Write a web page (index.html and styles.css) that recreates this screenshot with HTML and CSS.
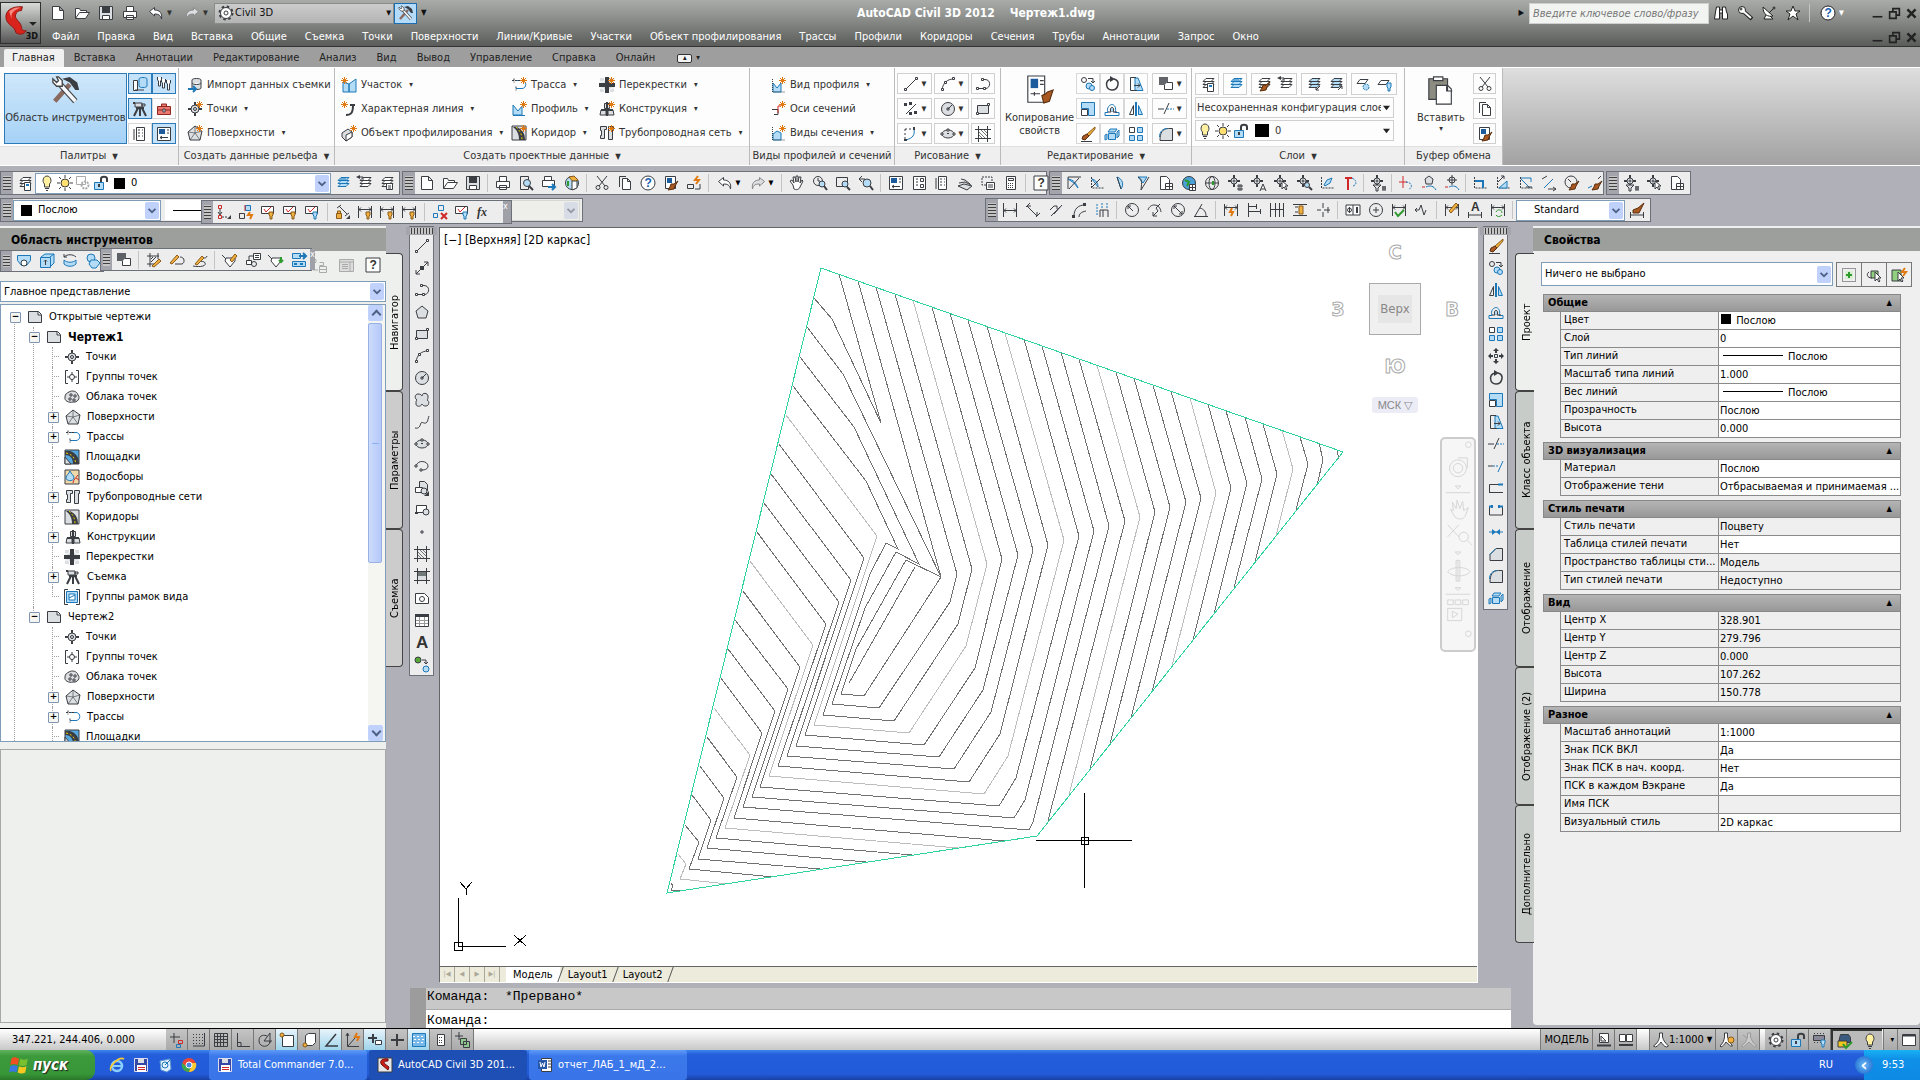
FILE: index.html
```html
<!DOCTYPE html>
<html lang="ru">
<head>
  <meta charset="utf-8">
  <meta name="viewport" content="width=device-width, initial-scale=1.0">
  <title>AutoCAD Civil 3D 2012 - Чертеж1.dwg</title>
  <link rel="stylesheet" href="styles.css">
</head>
<body>
<header class="titlebar">
  <button class="app-button" aria-label="Меню приложения">
    <svg viewBox="0 0 40 42"><path d="M22 4C10 3 3 9 5 17c2 7 9 7 10 14 4 3 9 2 11-2-3 1-5-1-5-4-1-6-8-8-6-13 1-3 3-4 6-4z" fill="#d8241c" stroke="#8c1512"/><path d="M8 9c4-4 8-5 12-4-6 2-11 5-9 12z" fill="#f58a80" stroke="none"/><path d="M29 20h8l-4 4z" fill="#222" stroke="none"/></svg>
    <span>3D</span>
  </button>
  <div class="title-rows">
    <div class="title-row">
      <div class="strip quick" data-icons="new open save print undo> redo>"></div>
      <span class="workspace"><i data-icon="gear"></i><select aria-label="Рабочее пространство"><option>Civil 3D</option></select></span>
      <button class="tool active" data-icon="hammer" aria-label="Область инструментов"></button>
      <span class="qat-more">▼</span>
      <h1>AutoCAD Civil 3D 2012 &nbsp;&nbsp; Чертеж1.dwg</h1>
      <span class="search-mark">▶</span>
      <input class="search" type="text" placeholder="Введите ключевое слово/фразу" aria-label="Поиск">
      <div class="strip infocenter" data-icons="binocular key dish star | helpc>"></div>
      <div class="strip window" data-icons="min restore close"></div>
    </div>
    <nav class="menu">
      <a href="#">Файл</a><a href="#">Правка</a><a href="#">Вид</a><a href="#">Вставка</a><a href="#">Общие</a><a href="#">Съемка</a><a href="#">Точки</a><a href="#">Поверхности</a><a href="#">Линии/Кривые</a><a href="#">Участки</a><a href="#">Объект профилирования</a><a href="#">Трассы</a><a href="#">Профили</a><a href="#">Коридоры</a><a href="#">Сечения</a><a href="#">Трубы</a><a href="#">Аннотации</a><a href="#">Запрос</a><a href="#">Окно</a>
      <div class="strip window" data-icons="min restore close"></div>
    </nav>
  </div>
</header>

<nav class="ribbon-tabs">
  <a href="#" class="current">Главная</a><a href="#">Вставка</a><a href="#">Аннотации</a><a href="#">Редактирование</a><a href="#">Анализ</a><a href="#">Вид</a><a href="#">Вывод</a><a href="#">Управление</a><a href="#">Справка</a><a href="#">Онлайн</a>
  <button class="collapse" aria-label="Свернуть ленту">▴</button><span class="drop">▾</span>
</nav>

<section class="ribbon">
  <div class="panel p-palettes">
    <div class="panel-body">
      <button class="big active" data-icon="hammer">Область инструментов</button>
      <div class="grid2 toggles" data-icons="prospector! wrenches! survey! toolbox panelbook props!"></div>
    </div>
    <h2>Палитры <b>▼</b></h2>
  </div>
  <div class="panel p-ground">
    <div class="panel-body">
      <div class="cmds">
        <button class="cmd" data-icon="import">Импорт данных съемки</button>
        <button class="cmd more" data-icon="pointnew">Точки</button>
        <button class="cmd more" data-icon="surfnew">Поверхности</button>
      </div>
    </div>
    <h2>Создать данные рельефа <b>▼</b></h2>
  </div>
  <div class="panel p-design">
    <div class="panel-body">
      <div class="cmds">
        <button class="cmd more" data-icon="parcel">Участок</button>
        <button class="cmd more" data-icon="feature">Характерная линия</button>
        <button class="cmd more" data-icon="grading">Объект профилирования</button>
      </div>
      <div class="cmds">
        <button class="cmd more" data-icon="alignnew">Трасса</button>
        <button class="cmd more" data-icon="profile">Профиль</button>
        <button class="cmd more" data-icon="corridor">Коридор</button>
      </div>
      <div class="cmds">
        <button class="cmd more" data-icon="crossnew">Перекрестки</button>
        <button class="cmd more" data-icon="assemblynew">Конструкция</button>
        <button class="cmd more" data-icon="pipenew">Трубопроводная сеть</button>
      </div>
    </div>
    <h2>Создать проектные данные <b>▼</b></h2>
  </div>
  <div class="panel p-views">
    <div class="panel-body">
      <div class="cmds">
        <button class="cmd more" data-icon="profview">Вид профиля</button>
        <button class="cmd" data-icon="sampleline">Оси сечений</button>
        <button class="cmd more" data-icon="sectview">Виды сечения</button>
      </div>
    </div>
    <h2>Виды профилей и сечений</h2>
  </div>
  <div class="panel p-draw">
    <div class="panel-body">
      <div class="boxes" data-icons="line> xdiv> dashcurve>"></div>
      <div class="boxes" data-icons="arc> circle> ellipse>"></div>
      <div class="boxes" data-icons="pline rect hatch"></div>
    </div>
    <h2>Рисование <b>▼</b></h2>
  </div>
  <div class="panel p-edit">
    <div class="panel-body">
      <button class="big" data-icon="matchbig">Копирование свойств</button>
      <div class="grid3" data-icons="copyobj rotate stretch scale offset mirror erase explode array"></div>
      <div class="boxes" data-icons="front> trim> fillet>"></div>
    </div>
    <h2>Редактирование <b>▼</b></h2>
  </div>
  <div class="panel p-layers">
    <div class="panel-body column">
      <div class="layer-row">
        <span class="strip boxed" data-icons="layprops"></span>
        <span class="strip boxed" data-icons="laymake"></span>
        <span class="strip boxed" data-icons="laymatch layprev"></span>
        <span class="strip boxed" data-icons="layiso layuniso"></span>
        <span class="strip boxed" data-icons="layfreeze layoff"></span>
      </div>
      <select class="flat" aria-label="Конфигурация слоев"><option>Несохраненная конфигурация слоев</option></select>
      <span class="flat layer-select"><i data-icon="bulb"></i><i data-icon="sun"></i><i data-icon="unlock"></i><i class="swatch"></i><select aria-label="Слой"><option>0</option></select></span>
    </div>
    <h2>Слои <b>▼</b></h2>
  </div>
  <div class="panel p-clip">
    <div class="panel-body">
      <button class="big more-below" data-icon="paste">Вставить</button>
      <div class="boxes" data-icons="cut copy match"></div>
    </div>
    <h2>Буфер обмена</h2>
  </div>
</section>

<section class="docks">
  <div class="dock-row">
    <div class="toolbar layers-bar"><span class="strip" data-icons="layprops"></span>
      <span class="xp layer-select wide"><i data-icon="bulb"></i><i data-icon="sun"></i><i data-icon="vpgear"></i><i data-icon="unlock"></i><i class="swatch"></i><select aria-label="Текущий слой"><option>0</option></select></span>
      <span class="strip" data-icons="laymake layprev laystate"></span></div>
    <div class="toolbar standard" data-icons="new open save | print preview plot globe | cut copy helpc match bedit | undo> redo> | pan zoomrt zoomwin zoomprev | props dcenter panelbook sheets markup calc | help"></div>
    <div class="toolbar civil" data-icons="ax1 ax2 ax3 ax4 pagegrid globeb globeg ptnum ptlet ptsel ptzoom transp redt | ptfilter | redpt ptdisk ptarc | seg1 seg2 seg3 seg4 circbrush brush"></div>
    <div class="toolbar" data-icons="ptfilter ptsel pagegrid"></div>
  </div>
  <div class="dock-row second">
    <div class="toolbar props-bar">
      <span class="xp layer-select color"><i class="swatch"></i><select aria-label="Цвет"><option>Послою</option></select></span>
      <span class="ltype"></span>
      <select class="xp disabled" disabled aria-label="Стиль печати"><option></option></select>
      <div class="toolbar floating constraints" data-icons="constr1 constr2 chk1 chk2 chk3 | lockdim dimb dimbs dimb | delconstr chk3 fx"></div>
    </div>
    <div class="toolbar dims"><span class="strip" data-icons="dimlin dimali dimpoly dimarc dimord | radius jog diam dimang | dimquick dimbase dimcont dimspace dimbreak | tol center dimcheck jogline | dimedit dimtext dimupd |"></span>
      <select class="xp" aria-label="Размерный стиль"><option>Standard</option></select>
      <span class="strip" data-icons="dimbrush"></span></div>
  </div>
</section>

<main class="workspace-area">
  <aside class="toolspace">
    <div class="palette">
      <h2 class="palette-title">Область инструментов</h2>
      <div class="palette-tools">
        <div class="toolbar floating vp3d" data-icons="cyl box3 turn union"></div>
        <div class="toolbar floating order" data-icons="front | hatchedit pledit spledit | attredit blocked attrsync attrext"></div>
        <span class="strip" data-icons="treegray listgray help"></span>
      </div>
      <select class="xp master" aria-label="Представление"><option>Главное представление</option></select>
      <div class="tree-box">
        <ul class="tree">
          <li><span class="row minus" data-icon="dwg">Открытые чертежи</span>
            <ul>
              <li><span class="row minus strong" data-icon="dwg">Чертеж1</span>
                <ul>
                  <li><span class="row" data-icon="point">Точки</span></li>
                  <li><span class="row" data-icon="ptgroup">Группы точек</span></li>
                  <li><span class="row" data-icon="cloudpt">Облака точек</span></li>
                  <li><span class="row plus" data-icon="surface">Поверхности</span></li>
                  <li><span class="row plus" data-icon="align">Трассы</span></li>
                  <li><span class="row" data-icon="site">Площадки</span></li>
                  <li><span class="row" data-icon="catch">Водосборы</span></li>
                  <li><span class="row plus" data-icon="pipe">Трубопроводные сети</span></li>
                  <li><span class="row" data-icon="road">Коридоры</span></li>
                  <li><span class="row plus" data-icon="assembly">Конструкции</span></li>
                  <li><span class="row" data-icon="cross">Перекрестки</span></li>
                  <li><span class="row plus" data-icon="survey">Съемка</span></li>
                  <li><span class="row" data-icon="frames">Группы рамок вида</span></li>
                </ul>
              </li>
              <li><span class="row minus" data-icon="dwg">Чертеж2</span>
                <ul>
                  <li><span class="row" data-icon="point">Точки</span></li>
                  <li><span class="row" data-icon="ptgroup">Группы точек</span></li>
                  <li><span class="row" data-icon="cloudpt">Облака точек</span></li>
                  <li><span class="row plus" data-icon="surface">Поверхности</span></li>
                  <li><span class="row plus" data-icon="align">Трассы</span></li>
                  <li><span class="row" data-icon="site">Площадки</span></li>
                </ul>
              </li>
            </ul>
          </li>
        </ul>
        <div class="scroll"><button class="up" aria-label="Вверх"></button><span class="thumb"></span><button class="down" aria-label="Вниз"></button></div>
      </div>
      <div class="item-view"></div>
    </div>
    <nav class="side-tabs right"><a href="#" class="current">Навигатор</a><a href="#">Параметры</a><a href="#">Съемка</a></nav>
  </aside>

  <section class="center">
    <div class="stage">
      <div class="toolbar vertical" data-icons="line xline pline polygon rect arc circle cloud spline ellipse earc insert block pt hatch gradient region table letter addsel"></div>
      <div class="canvas">
        <div class="model">
          <svg class="drawing" viewBox="440 228 1038 738" preserveAspectRatio="xMinYMin slice">
            <g id="contours"></g>
            <path class="edge" d="M821 268L1343 452L1037 836L667 893Z"/>
            <path class="cursor" d="M1036 840.5H1132M1084.500 793V888M1081 837h7v7h-7z"/>
            <path class="cursor" d="M458.500 898V946M458 946.500H506M454.500 942.500h8v8h-8zM460 882l6 7l6-7M466 889v6M514 935l12 11M526 935l-12 11"/>
          </svg>
          <div class="view-label">[−] [Верхняя] [2D каркас]</div>
          <div class="viewcube"><span class="n">С</span><span class="w">З</span><span class="face"><b>Верх</b></span><span class="e">В</span><span class="s">Ю</span><button class="wcs">МСК ▽</button></div>
          <div class="navbar">
            <svg viewBox="0 0 34 214"><circle cx="28" cy="6" r="3"/><circle cx="17" cy="31" r="9"/><circle cx="17" cy="31" r="5"/><path d="M17 20h10v11M4 57h26M4 165h26M9 75l5 8c3 3 9 3 11-2l3-8-5 3-1-10-3 8-3-9-1 9-4-7 1 9zM6 91l12 13M18 91l-12 13"/><circle cx="23" cy="104" r="5"/><path d="M27 108l5 5M17 129v22M15 129h4v22h-4zM6 141c4-6 20-6 24 0c-4 6-20 6-24 0zM6 171h6v5H6zM14 171h6v5h-6zM22 171h6v5h-6zM6 180h15v13H6zM11 183l6 3-6 4z"/><path d="M14 50h6l-3 3zM14 120h6l-3 3zM14 158h6l-3 3z"/><circle cx="28" cy="207" r="3"/></svg>
          </div>
        </div>
        <nav class="layout-tabs"><span class="nav-buttons"><button>|◀</button><button>◀</button><button>▶</button><button>▶|</button></span><a href="#" class="current">Модель</a><a href="#">Layout1</a><a href="#">Layout2</a></nav>
      </div>
      <div class="toolbar vertical" data-icons="erase copyobj mirror offset array move rotate scale stretch trim extend breakpt breakln join chamfer fillet explode"></div>
    </div>
    <div class="command">
      <div class="history">Команда:&nbsp; *Прервано*</div>
      <label class="prompt">Команда: <input type="text" aria-label="Командная строка"></label>
    </div>
  </section>

  <aside class="properties">
    <nav class="side-tabs left"><a href="#" class="current">Проект</a><a href="#">Класс объекта</a><a href="#">Отображение</a><a href="#">Отображение (2)</a><a href="#">Дополнительно</a></nav>
    <div class="palette">
      <h2 class="palette-title">Свойства</h2>
      <div class="palette-content">
        <div class="selection">
          <select class="xp" aria-label="Выбор"><option>Ничего не выбрано</option></select>
          <span class="strip pick" data-icons="pickadd selobj quicksel"></span>
        </div>
        <h3>Общие</h3>
        <table>
          <tr><th>Цвет</th><td><i class="swatch"></i> Послою</td></tr>
          <tr><th>Слой</th><td>0</td></tr>
          <tr><th>Тип линий</th><td><i class="rule"></i>Послою</td></tr>
          <tr><th>Масштаб типа линий</th><td>1.000</td></tr>
          <tr><th>Вес линий</th><td><i class="rule"></i>Послою</td></tr>
          <tr><th>Прозрачность</th><td>Послою</td></tr>
          <tr><th>Высота</th><td>0.000</td></tr>
        </table>
        <h3>3D визуализация</h3>
        <table>
          <tr><th>Материал</th><td>Послою</td></tr>
          <tr><th>Отображение тени</th><td>Отбрасываемая и принимаемая ...</td></tr>
        </table>
        <h3>Стиль печати</h3>
        <table>
          <tr><th>Стиль печати</th><td class="ro">Поцвету</td></tr>
          <tr><th>Таблица стилей печати</th><td>Нет</td></tr>
          <tr><th>Пространство таблицы сти...</th><td class="ro">Модель</td></tr>
          <tr><th>Тип стилей печати</th><td class="ro">Недоступно</td></tr>
        </table>
        <h3>Вид</h3>
        <table class="ro">
          <tr><th>Центр X</th><td>328.901</td></tr>
          <tr><th>Центр Y</th><td>279.796</td></tr>
          <tr><th>Центр Z</th><td>0.000</td></tr>
          <tr><th>Высота</th><td>107.262</td></tr>
          <tr><th>Ширина</th><td>150.778</td></tr>
        </table>
        <h3>Разное</h3>
        <table>
          <tr><th>Масштаб аннотаций</th><td>1:1000</td></tr>
          <tr><th>Знак ПСК ВКЛ</th><td>Да</td></tr>
          <tr><th>Знак ПСК в нач. коорд.</th><td>Нет</td></tr>
          <tr><th>ПСК в каждом Вэкране</th><td>Да</td></tr>
          <tr><th>Имя ПСК</th><td class="ro"></td></tr>
          <tr><th>Визуальный стиль</th><td>2D каркас</td></tr>
        </table>
      </div>
    </div>
  </aside>
</main>

<footer class="status">
  <output>347.221, 244.406, 0.000</output>
  <div class="strip cells" data-icons="infer snap gridb ortho polar osnap! osnap3 otrack! ducs dyn! lwt tpy! qp cycle"></div>
  <span class="spacer"></span>
  <button class="text">МОДЕЛЬ</button>
  <div class="strip cells" data-icons="layoutq drawq"></div>
  <span class="gap"></span>
  <button class="text" data-icon="person">1:1000 <b>▼</b></button>
  <div class="strip cells" data-icons="annovis annogray"></div>
  <span class="gap small"></span>
  <div class="strip cells" data-icons="gear unlock chip"></div>
  <div class="strip tray" data-icons="plotok bulb"></div>
  <button class="text"><b>▾</b></button>
  <div class="strip cells" data-icons="clean"></div>
</footer>

<footer class="taskbar">
  <button class="start" data-icon="flag">пуск</button>
  <div class="strip launch" data-icons="ie floppy recycle chrome"></div>
  <button class="task" data-icon="floppy">Total Commander 7.0...</button>
  <button class="task pressed" data-icon="acad">AutoCAD Civil 3D 201...</button>
  <button class="task" data-icon="word">отчет_ЛАБ_1_мД_2...</button>
  <span class="lang">RU</span>
  <div class="tray-xp"><button aria-label="Показать значки">‹</button><time>9:53</time></div>
</footer>
<script src="app.js"></script>
</body>
</html>
```
FILE: styles.css
```css
* { box-sizing: border-box; }
html, body { height: 100%; }
body { margin: 0; display: flex; flex-direction: column; overflow: hidden; background: #b0b0b8; color: #000; font: 11px/16px "DejaVu Sans Condensed", "DejaVu Sans", sans-serif; }
button, input, select { font: inherit; color: inherit; }
button { border: 0; padding: 0; background: none; }
a { color: inherit; text-decoration: none; }
h1, h2, h3, ul { margin: 0; padding: 0; font-size: 11px; font-weight: normal; }
select { appearance: none; border: 0; background: none; padding: 0 4px; min-width: 0; opacity: 1; }
ul { list-style: none; }
i { font-style: normal; }

/* icons */
.ico { width: 16px; height: 16px; flex: none; display: block; fill: none; stroke: #3a3d42; stroke-width: 1; overflow: visible; }
.ico .b { stroke: #1c78b8; }
.ico .r { stroke: #d02828; }
.ico .o { stroke: #e07a10; }
.ico .g { stroke: #2c9a2c; stroke-width: 2; }
.ico .h { stroke-width: 2; }
.ico .fb { fill: #b4dcf6; }
.ico .fw { fill: #fff; }
.ico .fg { fill: #dcdfe2; }
.ico .fk { fill: #3a3d42; stroke: none; }
.ico .fo { fill: #f0b040; stroke: #8a5a18; }
.ico .fy { fill: #fff0a0; }
.ico .fbr { fill: #a85820; stroke: #5a3010; }
.ico .n { stroke: none; }
.ico text { stroke: none; fill: #333; font: bold 12px "Liberation Sans", sans-serif; }
i[data-icon] { flex: none; }
.swatch { display: inline-block; flex: none; width: 11px; height: 11px; background: #000; }
.strip { display: flex; align-items: center; }
.tool { display: flex; align-items: center; justify-content: center; flex: none; width: 23px; height: 20px; }
.sep { flex: none; width: 1px; height: 18px; margin: 0 4px; background: #c4c4c4; }
.drop { font-size: 8px; }
.tool .drop { margin-left: 3px; font-size: 7px; }
.tool.has-drop { width: 34px; }

/* title */
.titlebar { display: flex; flex: none; height: 47px; background: linear-gradient(#a8aba8, #939693 30%, #5a5c5a); border-bottom: 1px solid #333; color: #fff; }
.app-button { position: relative; width: 41px; height: 42px; margin-top: 2px; border: 1px solid #303030; background: linear-gradient(#d8dad8, #8a8c8a 60%, #555); }
.app-button svg { display: block; width: 39px; height: 40px; }
.app-button span { position: absolute; right: 2px; bottom: -1px; color: #111; font-size: 9px; font-weight: bold; }
.title-rows { flex: 1; min-width: 0; }
.title-row { display: flex; align-items: center; height: 26px; padding-left: 5px; }
.quick { width: 168px; }
.quick .tool { width: 24px; }
.quick .has-drop { width: 36px; }
.quick .drop { color: #333; }
.workspace { display: flex; align-items: center; width: 180px; height: 21px; padding-left: 3px; border: 1px solid #8a8c8a; background: linear-gradient(#ccc, #b4b4b4); color: #111; }
.workspace select { flex: 1; padding: 0 1px; }
.workspace::after { content: "▼"; font-size: 7px; padding-right: 2px; }
.title-row > .active { border: 1px solid #1c6db0; background: #b4dcfa; height: 21px; }
.qat-more { margin-left: 4px; color: #111; font-size: 8px; }
.titlebar h1 { flex: 1; text-align: center; font-size: 12px; font-weight: bold; padding-left: 7px; }
.search-mark { color: #111; font-size: 8px; margin-right: 5px; }
.search { width: 180px; height: 21px; border: 1px solid #d0d0d0; background: #f2f4f2; color: #333; font-style: italic; padding: 0 3px; }
.search::placeholder { color: #777; }
.infocenter { width: 145px; }
.infocenter .tool { width: 24px; }
.infocenter .tool.has-drop { width: 36px; }
.infocenter .ico { stroke: #222; }
.window .tool { width: 17px; }
.window { margin: 0 0 0 15px; }
.window .ico { width: 13px; height: 13px; stroke: #222; }
.menu { display: flex; align-items: center; gap: 18px; height: 20px; padding: 2px 0 0 11px; white-space: nowrap; }
.menu .window { margin-left: auto; }

/* ribbon */
.ribbon-tabs { display: flex; flex: none; align-items: center; height: 20px; padding: 2px 0 0 4px; background: #9e9e9e; color: #222; }
.ribbon-tabs a { padding: 0 10px; line-height: 18px; }
.ribbon-tabs .current { padding: 0 9px 0 8px; background: #f0f0f0; border-radius: 2px 2px 0 0; }
.collapse { width: 15px; height: 9px; margin: 0 4px 0 12px; border: 1px solid #333; border-radius: 2px; background: #f4f4f4; font-size: 8px; line-height: 6px; }
.ribbon { display: flex; flex: none; height: 99px; background: linear-gradient(#dedede, #a2a2a2); border: 1px solid #fff; border-width: 1px 0; }
.panel { display: flex; flex: none; flex-direction: column; background: #fdfdfd; border-right: 1px solid #bbb; color: #333; }
.panel-body { display: flex; flex: 1; padding: 5px 4px 0; }
.panel h2 { height: 19px; line-height: 17px; text-align: center; background: #efefef; border-top: 1px solid #e0e0e0; white-space: nowrap; }
.panel h2 b, .status b { font-size: 8px; margin-left: 3px; }
.p-palettes { width: 179px; }
.p-ground { width: 156px; }
.p-design { width: 415px; }
.p-views { width: 145px; }
.p-draw { width: 106px; }
.p-edit { width: 191px; }
.p-layers { width: 213px; }
.p-clip { width: 98px; }
.big { display: flex; flex-direction: column; align-items: center; gap: 6px; height: 71px; padding: 1px; line-height: 13px; border: 1px solid transparent; white-space: nowrap; }
.big .ico { width: 30px; height: 30px; }
.p-palettes .big { width: 123px; margin-right: 1px; }
.big.active { border-color: #2c7ab8; background: linear-gradient(#cfe7fa, #a6d2f6); }
.p-edit .panel-body { padding-left: 2px; }
.p-edit .big { width: 74px; white-space: normal; }
.p-clip .big { width: 66px; }
.more-below::after { content: "▾"; font-size: 8px; line-height: 4px; margin-top: -3px; }
.grid2 { display: grid; grid-template-columns: 24px 24px; grid-auto-rows: 21px; row-gap: 4px; }
.grid3 { display: grid; grid-template-columns: repeat(3, 24px); grid-auto-rows: 21px; row-gap: 4px; margin-right: 4px; }
.grid2 .tool, .grid3 .tool { width: auto; height: 21px; border: 1px solid #d8d8d8; }
.toggles .active { border-color: #2c7ab8; background: #c4e2fa; }
.cmds { display: flex; flex-direction: column; padding: 2px 0 0 4px; gap: 5px; }
.cmd { display: flex; align-items: center; gap: 4px; height: 19px; white-space: nowrap; }
.cmd.more::after { content: "▾"; font-size: 8px; margin-left: 3px; }
.p-design .cmds:nth-child(1) { width: 168px; padding-left: 2px; }
.p-design .cmds:nth-child(2) { width: 88px; }
.p-views .panel-body { padding-left: 16px; }
.boxes { display: flex; flex-direction: column; gap: 4px; margin-right: 2px; }
.boxes .tool { width: 24px; height: 21px; border: 1px solid #d0d0d0; }
.boxes .has-drop { width: 35px; }
.p-draw .panel-body { padding-left: 2px; padding-right: 0; }
.p-clip .boxes .tool { width: 23px; }
.panel-body.column { flex-direction: column; gap: 2px; padding: 5px 3px 0; }
.layer-row { display: flex; gap: 4px; }
.boxed { border: 1px solid #d0d0d0; }
.boxed .tool { width: 22px; height: 20px; }
.flat { height: 21px; width: 199px; border: 1px solid #d0d0d0; background: url("data:image/svg+xml,%3Csvg xmlns='http://www.w3.org/2000/svg' viewBox='0 0 8 8'%3E%3Cpath d='M0 2h8l-4 5z' fill='%23222'/%3E%3C/svg%3E") no-repeat right 3px center / 7px; padding: 0 12px 0 1px; }
.layer-select { display: flex; align-items: center; gap: 2px; }
.layer-select select { flex: 1; }
.flat .swatch { margin-left: 4px; width: 14px; height: 13px; }

/* toolbars */
.docks { flex: none; padding-top: 5px; height: 60px; }
.dock-row { display: flex; gap: 2px; height: 24px; }
.dock-row.second { justify-content: flex-start; margin-top: 3px; }
.toolbar { display: flex; flex: none; align-items: center; height: 24px; border: 1px solid #6c7078; background: #ededee; padding-right: 2px; }
.toolbar::before { content: ""; flex: none; align-self: stretch; width: 8px; padding: 4px 2px; background: radial-gradient(#222 30%, #ccc 60%) 0 0 / 2px 3px content-box, #a4a4ac; }
.layers-bar { width: 400px; }
.layers-bar .tool { width: 22px; }
.standard { width: 645px; }
.standard .tool { width: 23px; }
.standard .has-drop { width: 33px; }
.standard .sep { margin: 0 3px; }
.civil { width: 555px; }
.civil .sep { margin: 0 2px; }
.xp { height: 21px; border: 1px solid #7f9db9; background: #fff url("data:image/svg+xml,%3Csvg xmlns='http://www.w3.org/2000/svg' viewBox='0 0 16 20'%3E%3Crect width='16' height='20' rx='2' fill='%23c0d2fb'/%3E%3Cpath d='M4 8l4 4l4-4' fill='none' stroke='%234d6185' stroke-width='2'/%3E%3C/svg%3E") no-repeat right 1px center / auto 17px; padding: 0 18px 0 3px; }
.layers-bar .wide { flex: 1; }
.wide .swatch, .color .swatch { margin-left: 3px; }
.props-bar { position: relative; width: 583px; }
.color { width: 148px; padding-left: 4px; }
.ltype { width: 60px; height: 20px; margin: 0 auto 0 4px; background: linear-gradient(#000, #000) 8px center / 50px 1px no-repeat #fff; }
.xp.disabled { width: 80px; border-color: #c9c7ba; background-color: #f0f0e0; color: #aca899; filter: grayscale(60%); opacity: .6; }
.floating { position: absolute; z-index: 2; height: 24px; }
.floating::before { width: 7px; }
.floating::after { content: "x"; align-self: stretch; width: 8px; background: #a0a0a8; color: #fff; font-size: 9px; line-height: 10px; margin-left: auto; margin-right: -2px; }
.constraints { left: 200px; top: 1px; width: 311px; }
.constraints .tool { width: 22px; }
.dims { margin-left: 400px; width: 666px; }
.dims select { width: 119px; padding-left: 17px; }
.dims .tool { width: 23px; }
.dims .strip { flex: none; }
.dims .sep { margin: 0 3px; }

/* palettes */
.workspace-area { display: flex; flex: 1; min-height: 0; }
.toolspace { display: flex; width: 403px; flex: none; }
.palette { display: flex; flex: 1; flex-direction: column; min-width: 0; background: #eef0ee; }
.palette-title { flex: none; height: 23px; margin-top: 2px; padding-left: 11px; background: #9c9f9c; font-size: 12px; font-weight: bold; line-height: 25px; }
.palette-tools { position: relative; flex: none; height: 30px; }
.palette-tools > .strip { justify-content: flex-end; height: 28px; gap: 4px; padding-right: 2px; }
.vp3d { left: 0; top: -1px; width: 104px; height: 22px; }
.order { left: 100px; top: -3px; width: 212px; height: 23px; }
.order .sep { margin: 0 3px; }
.master { flex: none; width: 100%; height: 21px; margin-bottom: 2px; }
.tree-box { display: flex; flex: none; height: 438px; border: 1px solid #7f9db9; background: #fff; overflow: hidden; }
.tree { flex: 1; padding: 2px 0 0 8px; }
.tree ul { padding-left: 19px; }
.tree li { position: relative; }
.tree li::before { content: ""; position: absolute; left: 5px; top: 0; bottom: 0; border-left: 1px dotted #a0a0a0; }
.tree > li::before { top: 10px; }
.tree li li:last-child::before { bottom: auto; height: 10px; }
.tree li li li:last-child::before { bottom: 0; height: auto; }
.tree li li:first-child li:last-child::before { bottom: auto; height: 10px; }
.row { display: flex; align-items: center; gap: 6px; height: 20px; }
.row::before { content: ""; position: relative; flex: none; width: 5px; height: 1px; margin: 0 -1px 0 7px; border-top: 1px dotted #a0a0a0; }
.row.plus::before, .row.minus::before { content: "+"; width: 9px; height: 9px; margin: 0 0 0 1px; border: 1px solid #8095b0; border-radius: 1px; background: #f4f4f0; font: bold 9px/7px "DejaVu Sans", sans-serif; text-align: center; }
.row.minus::before { content: "−"; }
.strong { font-weight: bold; font-size: 12px; }
.scroll { display: flex; flex-direction: column; width: 17px; background: #f5f5f1; }
.scroll button { width: 15px; height: 16px; border-radius: 2px; background: #c0d2fb; position: relative; }
.scroll button::before { content: ""; position: absolute; left: 5px; top: 6px; width: 5px; height: 5px; border: solid #4d6185; border-width: 2px 0 0 2px; transform: rotate(45deg); }
.scroll .down::before { top: 3px; transform: rotate(225deg); }
.thumb { width: 14px; height: 240px; margin: 2px 0 auto; border: 1px solid #98b0e8; border-radius: 2px; background: linear-gradient(#8cb0f8, #8cb0f8) center / 7px 1px no-repeat, linear-gradient(90deg, #cddcfd, #b5c9f8); }
.item-view { flex: 1; margin: 7px 0 5px; border: 1px solid #a8a8a8; }
.side-tabs { display: flex; flex-direction: column; flex: none; padding-top: 27px; }
.side-tabs a { width: 17px; height: 138px; border: 1px solid #444; background: #ccc; writing-mode: vertical-rl; transform: rotate(180deg); text-align: center; line-height: 18px; }
.side-tabs.right a { border-radius: 4px 0 0 4px; border-right: 0; }
.side-tabs.left a { width: 19px; line-height: 22px; border-radius: 0 4px 4px 0; border-left: 0; background: #c8ccc8; }
.side-tabs .current, .side-tabs.left .current { background: #eef0ee; }

/* center */
.center { display: flex; flex: 1; flex-direction: column; min-width: 0; padding-left: 6px; }
.stage { display: flex; flex: 1; min-height: 0; gap: 5px; padding-right: 7px; }
.vertical { flex-direction: column; align-self: flex-start; width: 25px; height: auto; padding: 0; }
.vertical::before { width: 100%; height: 6px; align-self: auto; padding: 1px 4px; background-size: 3px 2px, auto; }
.vertical .tool { height: 22px; }
.canvas { display: flex; flex: 1; flex-direction: column; min-width: 0; border: 1px solid #666; border-right-color: #fff; border-bottom-color: #fff; background: #fff; margin-top: 1px; }
.model { position: relative; flex: 1; min-height: 0; overflow: hidden; }
.drawing { position: absolute; inset: 0; width: 1038px; height: 738px; fill: none; shape-rendering: crispEdges; }
.contour { stroke: #707070; }
.contour.major { stroke: #bdbdbd; }
.edge { stroke: #2fd39c; }
.cursor { stroke: #000; }
.view-label { position: absolute; left: 4px; top: 4px; font-size: 12px; }
.viewcube { position: absolute; right: 10px; top: 7px; display: grid; grid-template: 34px 52px 34px auto / 30px 52px 30px; gap: 14px 16px; place-items: center; color: #fff; font-size: 20px; font-weight: bold; -webkit-text-stroke: 1px #aaa; }
.viewcube .n { grid-area: 1 / 2; }
.viewcube .w { grid-area: 2 / 1; }
.viewcube .e { grid-area: 2 / 3; }
.viewcube .s { grid-area: 3 / 2; }
.viewcube .wcs { grid-area: 4 / 2; }
.viewcube .face { grid-area: 2 / 2; display: grid; place-items: center; width: 52px; height: 52px; border: 1px solid #aaa; background: #f0f0f0; color: #888; -webkit-text-stroke: 0; font-size: 13px; }
.face b { padding: 6px 2px; background: #e6e6e6; font-weight: normal; }
.wcs { width: 46px; height: 16px; border-radius: 3px; background: #ececf6; color: #888; font: 11px/16px "Liberation Sans", sans-serif; -webkit-text-stroke: 0; white-space: nowrap; }
.navbar { position: absolute; right: 1px; top: 209px; width: 36px; height: 215px; border: 2px solid #ccc; border-radius: 5px; background: #f6f6f6; }
.navbar svg { display: block; fill: none; stroke: #d4d4d4; }
.layout-tabs { display: flex; flex: none; height: 16px; border-top: 1px solid #666; background: #ecebdc; line-height: 15px; }
.nav-buttons { display: flex; margin-right: 6px; }
.nav-buttons button { width: 15px; border-right: 1px solid #aca899; color: #aca899; font-size: 7px; white-space: nowrap; }
.layout-tabs a { position: relative; padding: 0 7px; margin-right: 1px; }
.layout-tabs a::after { content: ""; position: absolute; right: -1px; top: 0; height: 15px; border-right: 1px solid #555; transform: skewX(-20deg); }
.layout-tabs .current { background: #fff; }
.command { display: flex; flex: none; flex-direction: column; height: 40px; margin: 5px 4px 0 1px; border-left: 16px solid #9c9c9c; background: #fff; font: 13px/18px "Liberation Mono", monospace; }
.history { height: 22px; flex: none; padding-left: 1px; background: #c8c8c8; border-bottom: 1px solid #aaa; line-height: 17px; }
.prompt { display: flex; height: 18px; padding: 2px 0 0 1px; line-height: 18px; }
.prompt input { flex: 1; height: 16px; border: 0; background: none; }

/* properties */
.properties { display: flex; flex: none; width: 405px; }
.properties .side-tabs { margin-right: -1px; }
.properties .palette { background: #efefef; margin-bottom: 3px; border-radius: 0 0 4px 4px; }
.palette-content { padding: 11px 19px 0 10px; }
.selection { display: flex; gap: 3px; margin: 0 -10px 7px -2px; }
.selection select { flex: 1; height: 24px; }
.pick .tool { width: 26px; height: 25px; border: 1px solid #777; margin-right: -1px; }
.properties h3 { position: relative; height: 18px; padding-left: 4px; border: 1px solid #888; background: linear-gradient(#b4b4b4, #989898); font-weight: bold; line-height: 15px; }
.properties h3::after { content: "▴"; position: absolute; right: 8px; top: 0; font-size: 12px; }
table { border-collapse: collapse; table-layout: fixed; width: calc(100% - 17px); margin: -1px 0 4px 17px; }
tr { height: 18px; }
th, td { padding: 0 2px 0 3px; border: 1px solid #8a8a8a; line-height: 16px; font-weight: normal; text-align: left; white-space: nowrap; overflow: hidden; vertical-align: top; }
th { width: 158px; }
td { background: #fff; padding: 1px 0 0 1px; }
td.ro, .ro td { background: #efefef; }
td .swatch { width: 10px; height: 10px; margin: 0 2px 0 1px; }
.rule { display: inline-block; width: 60px; margin: 0 5px 4px 3px; border-top: 1px solid #000; vertical-align: middle; }

/* status and taskbar */
.status { display: flex; flex: none; height: 22px; border-top: 1px solid #000; background: linear-gradient(#fff, #c8c8c8); line-height: 22px; }
.status output { width: 166px; padding-left: 12px; }
.cells .tool { width: 22px; height: 21px; border: solid #777; border-width: 0 1px 0 0; background: linear-gradient(#c4c4c4, #aaa); }
.cells .active { background: linear-gradient(#e8f4fa, #9fd4ec); }
.spacer { flex: 1; }
.gap { width: 12px; }
.gap.small { width: 5px; }
.status .text { display: flex; align-items: center; padding: 0 3px; border: solid #777; border-width: 0 1px; background: linear-gradient(#c4c4c4, #aaa); }
.tray { border: 2px solid #333; border-width: 2px 0 0 2px; background: #bbb; width: 51px; gap: 2px; margin-right: 1px; }
.taskbar { display: flex; flex: none; align-items: stretch; height: 30px; background: linear-gradient(#3c86ee, #245edb 15%, #225ad8 80%, #1941a5); color: #fff; }
.start { display: flex; align-items: center; gap: 4px; width: 95px; padding-left: 9px; border-radius: 0 9px 9px 0; background: linear-gradient(#61b35e, #3c9a3c 20%, #379637 80%, #2a762a); font: italic bold 15px/28px "DejaVu Sans Condensed", sans-serif; text-shadow: 1px 1px 1px #222; }
.start .ico { width: 20px; height: 20px; }
.launch { width: 114px; padding-left: 10px; gap: 1px; }
.task { display: flex; align-items: center; gap: 5px; width: 158px; margin-right: 2px; padding-left: 8px; border-radius: 3px; background: linear-gradient(#5f9bf8, #3b78ea 20%, #3975e8); white-space: nowrap; }
.task.pressed { background: #1e4fb4; }
.lang { margin: auto 31px auto auto; }
.tray-xp { display: flex; align-items: center; gap: 9px; width: 56px; background: linear-gradient(#18b2f2, #0f90e8 30%, #0e8ae4); }
.tray-xp button { width: 18px; height: 18px; margin-left: -9px; border-radius: 50%; background: radial-gradient(#6cb8f8, #1060c8); font: bold 17px/14px "DejaVu Sans", sans-serif; }
```
FILE: app.js
```js
// 16x16 glyphs, stroke and fill classes live in styles.css
const spark = '<path class="o" d="M12.500 0v7M9 3.500h7M10 1l5 5M15 1l-5 5"/>';
const sparkLeft = '<path class="o" d="M3.500 0v7M0 3.500h7M1 1l5 5M6 1L1 6"/>';
const brush = '<path class="fbr" d="M15 6l-4 3-3 0-1 3-2 3 6-1 1-3z"/>';
const sheet = '<path class="fg" d="M1.500 2.500h10l3 3v8h-13zM11 2.500v3.500h3"/>';
const layers = '<path class="fw" d="M4 11.500h8l3-3H7zM4 8.500h8l3-3H7zM4 5.500h8l3-3H7z"/>';
const pnt = '<circle cx="8" cy="8" r="4" class="fg"/><circle cx="8" cy="8" r="1.500"/><path class="h" d="M8 1v3M8 12v3M1 8h3M12 8h3"/>';
const ptS = '<circle cx="7" cy="6" r="3" class="fg"/><circle cx="7" cy="6" r="1"/><path class="h" d="M7 0v3M7 9v3M1 6h3M10 6h3"/>';
const roadway = '<path class="fg" d="M1 1h14v14H1z"/><path class="fk" d="M2 2h4c6 3 8 7 8 13H8C8 9 6 5 2 2z"/><path stroke="#f0d000" stroke-dasharray="2" d="M5 2c4 4 6 7 6 13"/>';
const dim = '<path d="M1.500 2v12M14.500 2v12M2 5.500h12M4 3.500l-2 2 2 2M12 3.500l2 2-2 2"/>';
const bulbS = '<path class="fo" d="M9 8h4v3l-1 1v3h-2v-3l-1-1z"/>';
const bulbB = '<path class="b fb" d="M9 8h4v3l-1 1v3h-2v-3l-1-1z"/>';
const check = '<path class="fw" d="M1.500 2.500h12v7h-12z"/><path class="r" d="M4 5l2 3 5-5"/>';
const axis = '<path stroke-dasharray="2 1" d="M2.500 2v11h12"/>';
const icons = {
  new: '<path class="fw" d="M2.500 1.500h7l4 4v9h-11zM9.500 1.500v4h4"/>',
  open: '<path class="fw" d="M1.500 13.500v-10h4l1 2h6v2M1.500 13.500l4-6h10l-4 6z"/>',
  save: '<path class="fg" d="M1.500 1.500h13v13h-13z"/><path class="fk" d="M4 2h8v6H4z"/><path class="fw" d="M4.500 10.500h7v4h-7z"/>',
  print: '<path class="fw" d="M4.500 1.500h7v5h-7zM1.500 6.500h13v6h-13zM4.500 10.500h7v4h-7z"/>',
  preview: '<path d="M2.500 1.500h8v13h-8z"/><circle class="fb" cx="9" cy="8" r="3.500"/><path class="h" d="M11 11l4 4"/>',
  plot: '<path class="fw" d="M3.500 1.500h7v4h-7zM1.500 5.500h12v6h-12z"/><path class="b h" d="M7 12h6M11 9l3 3-3 3"/>',
  globe: '<circle cx="8" cy="8" r="6.500" class="fb"/><path class="fo" d="M5 2l5-1 4 4-4 3z"/><path class="g" d="M4 6v5"/><path class="fw" d="M8 6h5v7l-5 2z"/>',
  globeb: '<circle cx="8" cy="8" r="6.500" fill="#4aa0d8"/><path class="g" d="M4 5l4 2-2 4"/><path class="fw" d="M8.500 9.500h6v6h-6zM8.500 12.500h6M11.500 9v6"/>',
  globeg: '<circle cx="8" cy="8" r="6.500"/><ellipse cx="8" cy="8" rx="3" ry="6.500"/><path d="M1.500 8h13"/><path class="g" d="M9 6v4"/>',
  cut: '<path d="M3 1l8 10M13 1L5 11"/><circle cx="4" cy="12.500" r="2"/><circle cx="12" cy="12.500" r="2"/>',
  copy: '<path d="M2.500 12V1.500H9"/><path class="fw" d="M5.500 3.500h5l3 3v8h-8zM10.500 3.500v3h3"/>',
  helpc: '<circle cx="8" cy="8" r="7" class="fw"/><text x="4.500" y="12" style="fill:#1a60b0">?</text>',
  help: '<path class="fw" d="M1 1h14v14H1z"/><text x="4.500" y="12">?</text>',
  match: '<path class="fw" d="M2.500 1.500h10v12h-10z"/><path fill="#1c5c9c" stroke="none" d="M4 3h5v5H4z"/>' + brush,
  matchbig: '<path class="fw" stroke-width=".6" d="M1.500 .5h9v14h-9z"/><path fill="#1c5c9c" stroke="none" d="M3 2h4v5H3z"/><path stroke-width=".6" d="M8 3h2M8 5h2M3 10h5M5 9v2"/><path class="fbr" stroke-width=".6" d="M15 8l-3 1-1 1-2 1 1 4 3-1 1-3z"/>',
  bedit: '<path d="M1.500 9.500h6v4h-6zM9 14h5v-5"/><path class="o h" d="M12 1l-3 4h4l-3 4"/>',
  undo: '<path class="fw" d="M1.500 6.500l5-4v2.500c5 0 8 3 7 9-1-4-3-5-7-5v2z"/>',
  redo: '<path class="fg" stroke="#888" d="M14.500 6.500l-5-4v2.500c-5 0-8 3-7 9 1-4 3-5 7-5v2z"/>',
  pan: '<path class="fw" d="M4 10L1 6l2-1 2 3-1-6 2 0 1 5V1h2v6l1-5 2 0-1 6 2-3 1 1-3 6c-1 3-4 3-6 2z"/>',
  zoomrt: '<circle cx="6" cy="6" r="4.500"/><path d="M6 3v3h2"/><circle cx="10" cy="9" r="3" class="fb"/><path class="h" d="M12 11l3 4"/>',
  zoomwin: '<path d="M1.500 2.500h11v9h-11z"/><circle cx="10" cy="9" r="3" class="fb"/><path class="h" d="M12 12l3 3"/>',
  zoomprev: '<circle cx="9" cy="8" r="4" class="fb"/><path class="h" d="M12 11l3 4"/><path d="M1 4h6M4 1L1 4l3 3"/>',
  props: '<path class="fw" d="M1.500 1.500h13v13h-13z"/><path fill="#1c5c9c" stroke="none" d="M3 3h6v5H3z"/><path d="M11 4h2M11 7h2M4 11.500h8M6 10l-2 1.500 2 1.500"/>',
  dcenter: '<path class="fw" d="M2.500 1.500h12v13h-12z"/><path d="M5 4h2M5 7h2M5 10h2M9.500 3.500h3v3h-3zM9.500 9.500h3v3h-3z"/>',
  panelbook: '<path class="fw" d="M4.500 1.500h8v13h-8z"/><path d="M6 4h2M6 7h2M6 10h2M10 4h1M10 7h1M10 10h1M2 3v11"/>',
  sheets: '<path class="fg" d="M1 11l6-2 8 2-5 4zM2 8l6-1 6 3M4 4l4 1 5 4"/>',
  markup: '<path stroke-dasharray="2 1" d="M2 2h10v8H2z"/><path class="fw" d="M6.500 7.500h8v7h-8zM8 10h5M8 12h5"/>',
  calc: '<path class="fw" d="M3.500 1.500h9v13h-9zM5.500 3.500h5v2h-5z"/><path stroke-dasharray="1 1" d="M5 8.500h6M5 10.500h6M5 12.500h6"/>',
  gear: '<circle cx="8" cy="8" r="6.500" stroke-width="2" stroke-dasharray="2.500 2.600"/><circle cx="8" cy="8" r="5.500" class="fw"/><circle cx="8" cy="8" r="2"/>',
  hammer: '<path stroke="#8a6a60" stroke-width="2.500" d="M2 14L10 5"/><path class="fk" d="M6 2l4-1 4 3 1 4-2 0-3-4z"/><path stroke="#444" stroke-width="3" d="M4 4l9 10"/><path stroke="#f4f8fc" stroke-width="1.800" d="M4 4l9 10"/><path class="fw" stroke="#444" stroke-width=".7" d="M1 2l0 2 2 2 3 0 0-3-2-2-1 0 1 2-1 1z"/>',
  binocular: '<path class="fw" d="M2.500 7l1-5h3v12h-5zM13.500 7l-1-5h-3v12h5v-5zM6.500 5h3v3h-3z"/>',
  key: '<path stroke="#222" stroke-width="4" d="M6 6l9 8"/><circle cx="5" cy="5" r="3.500" class="fw"/><path stroke="#fff" stroke-width="2" d="M6 6l8 7"/><circle cx="4" cy="4" r="1"/>',
  dish: '<path class="fw" d="M2 2c0 8 5 10 10 9zM8 8l4-4M5 10l-2 4h9l-3-3"/><circle cx="13" cy="3" r="1"/>',
  star: '<path class="fw" d="M8 1l2 5h5l-4 3 2 6-5-4-5 4 2-6-4-3h5z"/>',
  min: '<path class="h" d="M2 12h12"/>',
  restore: '<path class="h" d="M2 6h8v8H2zM6 5V2h8v8h-3"/>',
  close: '<path stroke-width="3" d="M3 3l10 10M13 3L3 13"/>',
  prospector: '<path class="fw" d="M1.500 4.500h4v10h-4zM3 14h9"/><path class="b fb" d="M7 3c0-2 8-2 8 0v7c0 2-8 2-8 0z"/>',
  wrenches: '<path class="fw" d="M1.500 1v3l1 1v5h2V5l1-1V1M5.500 3v3l1 1v5h2V7l1-1V3M10.500 4v3l1 1v6h2V8l1-1V4"/>',
  survey: '<path class="fg" d="M3 2h7v4H3zM10 3h3v2h-3z"/><path class="h" d="M1 2h2M6 7L2 15M8 7v8M10 7l4 8M4 7h8"/>',
  toolbox: '<path fill="#e87870" stroke="#902820" d="M1.500 5.500h13v8h-13zM5.500 5V3h5v2M1 9h14"/><path class="fw" d="M7 8h2v3H7z"/>',
  import: '<path class="fg" d="M5 3c0-2 9-2 9 0v8c0 2-9 2-9 0zM5 6c1 2 8 2 9 0"/><path class="b h" d="M1 12h8M6 9l3 3-3 3"/>',
  point: pnt,
  surface: '<path class="fg" d="M8 1l7 5-2 9H3L1 7z"/><path stroke-width=".6" d="M8 8L8 1M8 8l7-2M8 8l5 7M8 8l-5 7M8 8L1 7"/>',
  parcel: '<path class="fb b" d="M2 15V5l6 2v8zM8 7l7-5v13H8z"/>' + sparkLeft,
  feature: '<path class="h" d="M5 14c5 0 7-2 7-10M9 4h5"/>' + sparkLeft,
  grading: '<path class="fg" d="M1 8l6-4 4 3v5l-6 4-4-4z"/><path class="fw" d="M5 10l6-3v5l-6 4z"/>' + spark,
  align: '<path class="b" d="M6 3.500h5c5 0 5 8 0 8H5"/><path stroke-dasharray="2 1" d="M1 3.500h9M3 1.500v4M5 9.500v4"/>',
  profile: '<path class="b fb" d="M2 14.500h12M2 4l5 6 4-5v9H2z"/>' + spark,
  corridor: roadway + spark,
  road: roadway,
  cross: '<path class="fg n" d="M1 1h14v14H1z"/><path class="fk" d="M6 0h4v6h6v4h-6v6H6v-6H0V6h6z"/><path stroke="#fff" d="M5.500 1v2l-2 2H1M10.500 1v2l2 2H15M5.500 15v-2l-2-2H1M10.500 15v-2l2-2H15"/>',
  assembly: '<path class="fg" d="M5.500 2.500h5v5h-5zM1 14l1-5h5v5zM15 14l-1-5H9v5z"/><path class="h" d="M8 1v14M2 9h12"/>',
  pipe: '<path class="fg" d="M1.500 1.500h6v3h-2v9h-4v-3h1v-5h-1zM9.500 14.500v-13h5v3h-1v10z"/>',
  profview: '<path class="b fb" d="M3 15V6l4 5 4-5v9z"/><path stroke-dasharray="1 1" d="M2.500 2v13H15"/>' + spark,
  sampleline: '<path d="M2 8.500h6v5H4"/><path class="r" d="M8 12V5h3"/>' + spark,
  sectview: '<path class="b fb" d="M3 15V9l4-3 4 2v7z"/><path stroke-dasharray="1 1" d="M2.500 2v13H15"/>' + spark,
  line: '<path d="M3 13L13 3"/><path class="fw" d="M1.500 12.500h2v2h-2zM12.500 1.500h2v2h-2z"/>',
  xline: '<path d="M2 14L14 2M2 10v4h4M10 2h4v4"/><path class="fk" d="M6 6h4v4H6z"/>',
  xdiv: '<path d="M3 13L13 3"/><path class="fk" d="M1 2h3v3H1zM6 1h3v3H6zM6 11h3v3H6zM11 10h3v3h-3z"/>',
  dashcurve: '<path stroke-dasharray="2 2" d="M2 3h9M2 3v11"/><path class="b" d="M11 3c1 6-1 9-8 11"/><path class="fk" d="M1 13h3v2H1zM10 1h2v3h-2z"/>',
  pline: '<path d="M3 12.500h8c5-1 5-9-1-9H7"/><path class="fw" d="M1.500 11.500h2v2h-2zM8.500 11.500h2v2h-2zM6.500 2.500h2v2h-2z"/>',
  polygon: '<path class="fg" d="M8 2l6 5-2 7H4L2 7z"/>',
  rect: '<path class="fg" d="M2.500 4.500h11v8h-11z"/><path class="fw" d="M1.500 11.500h2v2h-2zM12.500 2.500h2v2h-2z"/>',
  arc: '<path d="M2 14C3 7 7 3 14 3"/><path class="fw" d="M1.500 12.500h2v2h-2zM4.500 5.500h2v2h-2zM12.500 1.500h2v2h-2z"/>',
  circle: '<circle cx="8" cy="8" r="6.500" class="fg"/><path d="M8 8l4-4M7 7h2v2H7z"/>',
  cloud: '<path class="fg" d="M8 4c0-4 6-3 6 0s0 3-1 4c3 1 2 6-1 6s-3-1-4-2c-1 3-6 3-6 0s0-3 1-4C0 6 1 2 4 2s3 1 4 2z"/>',
  spline: '<path d="M1 14c4 1 5-2 6-5 1-2 4 2 6-1 1-1 1-4 2-6"/>',
  ellipse: '<ellipse cx="8" cy="8" rx="6" ry="4" class="fg"/><path class="fw" d="M1 7h2v2H1zM13 7h2v2h-2zM7 3h2v2H7zM7 7.500h2"/>',
  earc: '<path d="M2 8c2-7 12-5 12 0 0 3-3 4-6 4"/><path class="fw" d="M1 7h2v2H1zM6 11h2v2H6z"/>',
  insert: '<path class="fg" d="M5.500 1.500h5l3 3v6h-8z"/><path class="fw" d="M1.500 7.500h7v5h-7z"/><circle cx="10" cy="11" r="3" class="fg"/><path class="fk" d="M15 11v5h-5z"/>',
  block: '<path class="fw" d="M2.500 3.500h10v7h-10z"/><circle cx="12" cy="10" r="3" class="fg"/><path class="fk" d="M1 10h3v2H1z"/>',
  pt: '<path d="M7 7h2v2H7z"/>',
  hatch: '<path d="M0 3.500h16M0 12.500h16M3.500 0v16M12.500 0v16"/><path stroke="#777" d="M4 6l6 6M4 9l3 3M6 4l6 6M9 4l3 3"/>',
  gradient: '<path d="M0 3.500h16M0 12.500h16M3.500 0v16M12.500 0v16"/><path fill="#707878" stroke="none" d="M4 4h8v4H4z"/><path class="fg n" d="M4 8h8v4H4z"/>',
  region: '<path class="fw" d="M1.500 3.500h9l4 4v6h-13z"/><circle cx="8" cy="9" r="2.500"/>',
  table: '<path class="fw" d="M1.500 2.500h13v12h-13z"/><path stroke="#999" d="M2 8.500h12M2 11.500h12M5.500 5v9M10.500 5v9"/><path class="fk" d="M1 2h14v3H1z"/>',
  letter: '<text x="2" y="14" style="font-size:17px">A</text>',
  addsel: '<circle cx="4" cy="4" r="3" fill="#58a838"/><circle class="b fb" cx="12" cy="13" r="3"/><path d="M8 4h4v4M10 6l2 2 2-2"/>',
  erase: '<path class="fo" d="M15 1l-8 7 2 2 6-7z"/><path class="fbr" d="M7 8l-4 2-1 3 3 1 4-4z"/><path d="M1 15.500h11"/>',
  copyobj: '<circle cx="4" cy="4" r="2.500"/><circle class="b fb" cx="9" cy="10" r="3"/><circle class="b fb" cx="12" cy="12" r="2.500"/><path d="M8 2.500h5v4M11 5l2 2 2-2"/>',
  mirror: '<path d="M1.500 13.500l4-9v9z"/><path class="b fb" d="M14.500 13.500l-4-9v9z"/><path class="b h" d="M8 1v14"/>',
  offset: '<path class="b" d="M1 14.500h14v-3h-4c2-5-1-8-3-8s-6 3-4 8H1z"/><path class="fb" d="M4 11h3c-3-6 5-6 2 0h4"/>',
  array: '<path class="fw" d="M1.500 1.500h5v5h-5z"/><path class="b fb" d="M9.500 1.500h5v5h-5zM1.500 9.500h5v5h-5zM9.500 9.500h5v5h-5z"/>',
  move: '<path class="h" stroke-dasharray="3 6 3" d="M8 2v12M2 8h12"/><path d="M6.500 6.500h3v3h-3z"/><path class="fk" d="M8 0l3 3H5zM8 16l3-3H5zM0 8l3-3v6zM16 8l-3-3v6z"/>',
  rotate: '<path stroke-width="1.500" d="M10 3c7 2 4 11-2 11S0 5 7 3"/><path class="fk" d="M6 0l5 3-5 3z"/>',
  scale: '<path class="b fb" d="M1.500 1.500h13v13h-6v-7h-7z"/><path class="fw" d="M1.500 8.500h6v6h-6z"/>',
  stretch: '<path class="b fb" d="M7 2h3l5 12.500H7z"/><path d="M8 1.500H2.500v13H9M6 9.500h6M10 7.500l2 2-2 2"/>',
  trim: '<path d="M0 8h6M6 13l5-11"/><path class="b" stroke-dasharray="2 1" d="M9 8h7"/>',
  extend: '<path d="M0 8h5"/><path class="b" stroke-dasharray="2 1" d="M5 8h6"/><path class="b" d="M10 14l5-11"/>',
  breakpt: '<path d="M1.500 13V4.500h9M1 12.500h14"/><path class="b h" d="M10 4.500h5"/>',
  breakln: '<path d="M1.500 5v8h13V5"/><path class="b h" d="M1 4.500h4M11 4.500h4M4 3v3M11 3v3"/>',
  join: '<path class="b" d="M1 8h14"/><path fill="#1c78b8" stroke="none" d="M4 5l4 3-4 3zM12 5L8 8l4 3z"/>',
  chamfer: '<path class="fg" d="M2 14.500h12.500v-12H8l-6 6z"/><path class="b" d="M1.500 9L8 2.500"/>',
  fillet: '<path class="fg" d="M2 14.500h12.500v-12h-4c-6 0-8.500 4-8.500 12z"/><path class="b" d="M1.500 11c0-5 3-8.500 8-8.500"/>',
  explode: '<path class="b fb" d="M4.500 7.500h7v6h-7zM4 6l2-3h7l-2 3zM13 6l2-2v6l-2 2zM3 8L1 9v5l2-1z"/>',
  front: '<path class="fk" style="opacity:.8" d="M1 1h9v8H1z"/><path class="fw" d="M9 6.500h5.500v7h-8V9"/>',
  layprops: layers + '<path class="fw" d="M8.500 7.500h6v8h-6z"/><path class="b h" d="M10 10h3"/>',
  laymake: layers.replace('fw', 'fb b') + '<path class="b" d="M6 4h6"/>',
  laymatch: layers + brush,
  layprev: layers + '<path class="fk" d="M0 2l4-2v4z"/><path d="M3 2h4v3"/>',
  laystate: layers + '<path class="fw" d="M8.500 8.500h6v6h-6zM10 11h3M10 13h3"/>',
  layiso: layers.replace('fw', 'fb') + '<path d="M15 10l-4 4M11 11v3h3"/>',
  layuniso: layers.replace('fw', 'fb') + '<path d="M11 14l4-4M12 10h3v3"/>',
  layfreeze: '<path class="fw" d="M2 7.500h8l3-4H5z"/><circle class="b fb" cx="11" cy="11" r="3" stroke-dasharray="2 1"/>',
  layoff: '<path class="fw" d="M1 8.500h8l3-4H4z"/><path class="b fb" d="M10 7h4v4l-1 1v3h-2v-3l-1-1z"/>',
  bulb: '<path class="fy" d="M5.500 9c-3-3-1-8 2.500-8s5.500 5 2.500 8v3h-5zM6 13.500h4M7 15.500h2"/>',
  sun: '<circle cx="8" cy="8" r="4" fill="#ffe070"/><path d="M8 0v3M8 13v3M0 8h3M13 8h3M2 2l2 2M14 2l-2 2M2 14l2-2M14 14l-2-2"/>',
  unlock: '<path class="fb b" d="M1.500 7.500h9v7h-9z"/><path class="h" d="M8 7V4c0-3 6-3 6 0v3M6 9v3"/>',
  vpgear: '<path stroke="#aaa" d="M1.500 1.500h9v8h-9z"/><circle cx="10" cy="10" r="3.500" stroke="#aaa" stroke-width="2" stroke-dasharray="2 1"/>',
  paste: '<path fill="#8c8c80" stroke-width=".6" d="M1.500 2h10v11h-10z"/><path class="fw" stroke-width=".6" d="M4 1h5v2H4zM5.500 5.500h6l2 2v8h-8zM11 5.500v3h3"/>',
  dwg: sheet,
  ptgroup: '<path d="M4 1.500H1.500v13H4M12 1.500h2.500v13H12"/><circle cx="8" cy="8" r="2.500"/><path d="M8 3v3M8 10v3M3 8h3M10 8h3"/>',
  cloudpt: '<path class="fg" d="M5 3c3-2 8-1 9 3 3 3-1 8-5 7-4 1-9-1-8-5 0-3 2-4 4-5z"/><path class="fw" d="M6 5h2v2H6zM10 6h2v2h-2zM5 9h2v2H5zM9 10h2v2H9z"/>',
  site: '<path fill="#58a8e0" d="M1 1h14v14H1z"/><path class="fk" d="M1 2h5c6 2 9 6 9 13H9C9 9 6 6 1 6z"/><path class="fg" d="M1 8l6 7H1z"/><path stroke="#f0d000" stroke-dasharray="2" d="M2 4c6 1 9 5 10 11"/>',
  catch: '<path fill="#f0d8a8" d="M1 1h14v14H1z"/><path class="r" d="M9 14c0-3 3-5 5-8M12 9l3 2"/><path class="b fb" d="M6 2c-1 3-4 4-4 7s7 4 8 0c0-3-3-4-4-7z"/>',
  frames: '<path d="M4 .5H.5v15H4M12 .5h3.500v15H12"/><path class="b fb" d="M2.500 2.500h11v11h-11z"/><path class="fw b" d="M5 5h6v6H5zM5 9l6-3"/>',
  ax1: '<path class="b fb" d="M2 4c6 1 8 4 10 9L8 8z"/><path d="M2 14V2h13M3 14L13 3"/>',
  ax2: axis + '<path class="b fb" d="M3 4c4 1 6 4 6 8z"/><path d="M3 12l8-8"/>',
  ax3: '<path class="b fb" d="M5 2c6 2 7 8 4 12z"/><path d="M5 2l4 12"/>',
  ax4: '<path class="b fb" d="M3 2h9L8 8z"/><path d="M3 2c4 2 4 4 3 13L14 2"/>',
  pagegrid: '<path class="fw" d="M2.500 1.500h6l3 3v10h-9z"/><path class="fw" d="M7.500 8.500h7v6h-7zM7 11.500h8M11.500 8v7"/>',
  ptnum: ptS + '<path d="M10 11h6M10 14h6M12 9v7M14 9v7"/>',
  ptlet: ptS + '<path d="M10 16l3-7 3 7M11 14h4"/>',
  ptsel: ptS + '<path class="fw" d="M9 6v8l2-2 2 3 1-1-2-3h3z"/>',
  ptzoom: ptS + '<circle cx="11" cy="10" r="2.500" class="fb"/><path class="h" d="M13 12l3 3"/>',
  ptfilter: ptS + '<path class="fg" d="M3 10h8l-3 3v3H6v-3z"/><path d="M12 12h4M12 14h4M13 11v5M15 11v5"/>',
  transp: axis + '<path class="b fb" d="M5 10l3-5 5-2-2 5-5 3z"/>',
  redt: '<path class="r h" d="M6 2v13M3 3h7"/><path class="b" stroke-dasharray="2 1" d="M10 3c5 2 5 7 1 8"/>',
  redpt: '<path class="r" d="M5 1v12M1 7h8"/><path class="b" stroke-dasharray="2 1" d="M8 7c6 0 7 6 3 7"/>',
  ptdisk: '<path class="fg" d="M8 1l4 3-1 5H5L4 4z"/><path class="r" d="M1 12h3"/><path class="b" d="M5 12c4-2 8-1 10 3"/>',
  ptarc: '<circle cx="8" cy="5" r="3"/><path d="M8 0v10M3 5h10"/><path class="r" d="M1 12h3"/><path class="b" d="M5 12c4-2 8-1 10 3"/>',
  seg1: axis + '<path class="b h" d="M3 6h8v7"/>',
  seg2: axis + '<path class="b fb" d="M4 13l8-7v7z"/><path d="M3 7l6-6M6 1h3v3"/>',
  seg3: axis + '<path class="b" d="M3 3h10v4M3 4l9 9"/><path d="M8 12h6"/>',
  seg4: '<path class="b" d="M3 13L12 4"/><path d="M1 4l5-3M7 14h8M12 12l3 2-3 2"/>',
  circbrush: '<circle cx="7" cy="7" r="6"/><path d="M7 7L4 4"/>' + brush,
  brush: '<path class="b" d="M1 13l4-2"/><path d="M11 4l3-3"/>' + brush,
  constr1: '<path class="r" d="M2.500 1.500h3v3h-3zM2.500 11.500h3v3h-3z"/><path d="M4 5v5M2 8l2 3 2-3"/><path stroke-dasharray="2 1" d="M6 13h5"/><path class="fk" d="M15 11v4h-4z"/>',
  constr2: '<path class="b fb" d="M7.500 1.500h5v5h-5z"/><path class="r" d="M7 1v6M1 9.500h5"/><path d="M1.500 9.500h5v5h-5z"/><path class="o h" d="M12 8l-2 3h4l-2 4"/>',
  chk1: check + bulbS,
  chk2: check + bulbS,
  chk3: check + bulbB,
  lockdim: '<path class="fo" d="M1.500 9.500h5v5h-5zM2.500 9V7h3v2"/><path d="M4 2l8 8M2 4l4-3M10 12l4-3"/><path class="fk" d="M15 11v4h-4z"/>',
  dimb: dim + bulbS,
  dimbs: dim + bulbS,
  delconstr: '<path class="b" d="M6.500 1.500h5v5h-5zM1.500 9.500h4v4h-4z"/><path class="r h" d="M9 9l6 6M15 9l-6 6"/>',
  fx: '<text x="1" y="12" style="font-family:Liberation Serif;font-style:italic">fx</text>',
  dimlin: '<path d="M1.500 1v14M14.500 1v14M2 8.500h12M4 6.500l-2 2 2 2M12 6.500l2 2-2 2"/>',
  dimali: '<path d="M2 4l10 10M5 1L1 5M15 11l-4 4M2 4l4 0M12 14v-4"/>',
  dimpoly: '<path d="M2 8l4-4M6 12L14 3M3 14L12 5M6 4h3v3"/>',
  dimarc: '<path d="M3 14C3 7 7 3 14 3M8 15c0-3 2-5 7-6"/><path class="fk" d="M1 13h3v3H1zM12 1h3v3h-3z"/>',
  dimord: '<path class="b" stroke-dasharray="2 1" d="M3 2v12M8 1v6M13 1v6"/><path d="M6 15V8h8v7M9 8v7"/>',
  radius: '<circle cx="8" cy="8" r="6.500"/><path d="M9 9L4 4M4 7V4h3"/>',
  jog: '<path d="M1 8c2-7 12-7 13 2M13 2L9 6l2 3-5 5M6 10v4h4"/>',
  diam: '<circle cx="8" cy="8" r="6.500"/><path d="M4 4l8 8M4 7V4h3M12 9v3H9"/>',
  dimang: '<path d="M1 14.500h14M2 14L9 2M7 6c4 1 6 4 6 8"/>',
  dimquick: dim + '<path class="o h" d="M9 6l-2 4h3l-2 4"/>',
  dimbase: '<path d="M2.500 1v14M2 4.500h8M2 9.500h12M10.500 2v5M14.500 7v5"/>',
  dimcont: '<path d="M1.500 1v14M6.500 1v14M10.500 1v14M14.500 1v14M1 7.500h14"/>',
  dimspace: '<path d="M1 2.500h14M1 13.500h14M3 5h3M3 10h3"/><path class="fo" d="M7 4h4v8H7z"/>',
  dimbreak: '<path d="M2 8h4M9 8h6M8 1v5M8 10v5M13 5v6"/>',
  tol: '<path class="fw" d="M1 3h14v10H1zM8 3v10"/><circle cx="4.500" cy="8" r="2"/><path class="h" d="M12 5v6"/><path d="M4.500 5v6"/>',
  center: '<circle cx="8" cy="8" r="6.500"/><path d="M8 5v6M5 8h6"/>',
  dimcheck: dim + '<path class="g" d="M4 10l3 4 6-6"/>',
  jogline: '<path d="M1 8h4l2-5 3 10 2-5M1 8l2-2M1 8l2 2"/>',
  dimedit: dim + '<path class="fo" d="M5 9l7-8 2 2-7 8z"/>',
  dimtext: '<path d="M1.500 10v6M14.500 10v6M1 13h14"/><text x="4" y="9">A</text>',
  dimupd: dim + '<path stroke="#2c9a2c" d="M6 10c1-3 6-3 6 1M12 13c-2 2-5 2-6 0"/>',
  dimbrush: '<path d="M1.500 10v6M14.500 10v6M1 13h14"/><path class="fbr" d="M15 1L9 6l-5 2 0 3 6 0z"/>',
  cyl: '<path class="b fb" d="M1.500 2.500h13v5l-4 5h-5l-4-5z"/><circle cx="8" cy="10" r="3" class="fw"/>',
  box3: '<path class="b fb" d="M1.500 4.500h10v10h-10zM2 4l4-3h9v9l-4 4M11 4l4-3"/><path d="M6.500 12V7M5 8.500L6.500 7 8 8.500"/>',
  turn: '<path class="b fb" d="M2 7c3 3 9 3 12 0v4c-3 3-9 3-12 0z"/><path d="M2 4c3-3 9-3 12 0M2 1v3h3"/>',
  union: '<circle cx="6" cy="5" r="4" class="b fb"/><path class="b fb" d="M6 7h6l3 3-4 5H7L4 11z"/>',
  hatchedit: '<path d="M1 4h12M1 12h8M4 1v14M12 1v6M5 10l5-5M5 7l2-2"/><path class="fo" d="M6 14l7-7 2 2-7 6z"/>',
  pledit: '<path d="M6 12h7c3-1 3-7-2-7"/><path class="fo" d="M1 11l7-8 2 2-7 7z"/>',
  spledit: '<path d="M1 14c4 1 14 1 12-3-1-3-6 0-5-3 1-4 6 0 7-4"/><path class="fo" d="M3 12l7-8 2 2-7 7z"/>',
  attredit: '<path class="fw" d="M4 6h9v3l-5 6-5-6z"/><path d="M0 3l4 4"/><path class="fo" d="M8 8l5-6 2 2-5 6z"/>',
  blocked: '<path class="fw" d="M8.500 1.500h7v6h-7zM10 3.500h4M10 5.500h4M1.500 8.500h5v4h-5z"/><circle cx="9" cy="12" r="2.500"/><path d="M4 8V4h4"/>',
  attrsync: '<path class="fw" d="M4 6h9v3l-5 6-5-6z"/><path d="M0 3l4 4"/><path class="g" d="M13 5v5M11 8l2 2 2-2"/>',
  attrext: '<path class="b fb" d="M1.500 1.500h8v5h-8zM1.500 9.500h13v5h-13z"/><path class="b h" d="M8 4h6M12 1l3 3-3 3M3 12h3M9 12h3"/>',
  treegray: '<path stroke="#aaa" d="M0 2.500h5v3H0M2 6v7h5M8.500 5.500h4v3h-4M8.500 9.500h7v6h-7zM8 12.500h8"/>',
  listgray: '<path stroke="#aaa" fill="#ddd" d="M1.500 2.500h14v12h-14zM2 5h13M4 7.500h6M4 9.500h6M4 11.500h6M12 5v9"/>',
  pickadd: '<path stroke-dasharray="1 1" d="M1.500 1.500h13v13h-13z"/><path fill="#d8f0d0" stroke="none" d="M4 4h8v8H4z"/><path class="g" d="M8 5v6M5 8h6"/>',
  selobj: '<path fill="#90d080" d="M5 4h7v7H5z"/><path d="M3 5c-3 2-2 6 3 6"/><path class="fw" d="M9 5v9l2-2 2 3 1-1-2-3h3z"/>',
  quicksel: '<path fill="#90d080" d="M1 3h9v11H1z"/><path class="fw" d="M7 5v9l2-2 2 3 1-1-2-3h3z"/><path class="o h" d="M14 1l-3 4h4l-3 4"/>',
  infer: '<path d="M5 1v10M1 5h10"/><path class="r" d="M9.500 8.500h4v3h-4z"/><path class="b" d="M7.500 12.500h4v3h-4z"/>',
  snap: '<path stroke-dasharray="1 2" d="M2 2.500h10M2 5.500h10M2 8.500h10M2 11.500h10"/><path d="M13.500 1v13H2"/>',
  gridb: '<path d="M1.500 1.500h13v13h-13zM1 4.500h14M1 7.500h14M1 10.500h14M4.500 1v14M7.500 1v14M10.500 1v14"/>',
  ortho: '<path d="M2.500 1v13.500H15M2 10.500h4v4"/>',
  polar: '<path d="M13 9c0 7-11 7-11 0S8 3 10 4M7 9h8M7 9l6-8v10"/>',
  osnap: '<path class="fw" d="M3.500 3.500h11v11h-11z"/><circle cx="3" cy="3" r="2" class="fo"/>',
  osnap3: '<path class="fw" d="M4.500 3.500l3-2h7v9l-3 3h-7z"/><circle cx="4" cy="13" r="2" class="fo"/>',
  otrack: '<path stroke-width="1.500" d="M13 2L3 14h12"/>',
  ducs: '<path d="M2.500 2v12.500H14M3 14L10 6M1 4l1.500-3L4 4"/><path class="o h" d="M12 1l-2 4h4l-2 4"/>',
  dyn: '<path class="h" d="M1 6h9M6 2v9"/><path class="fw" d="M8.500 8.500h6v4h-6z"/>',
  lwt: '<path class="h" d="M8 2v12M2 8h13"/>',
  tpy: '<path fill="#78b8e8" class="b" d="M1.500 1.500h13v13h-13z"/><path stroke="#fff" stroke-dasharray="2 2" d="M2 4.500h12M3 7.500h12M2 10.500h12"/>',
  qp: '<path class="fw" d="M4.500 2.500h7v11h-7z"/><path stroke-dasharray="1 1" d="M6 5.500h4M6 8.500h4M6 10.500h4"/>',
  cycle: '<path d="M4 0v8M0 4h8"/><path fill="#90c890" d="M5.500 6.500h6v6h-6zM8.500 9.500h6v6h-6z"/>',
  layoutq: '<path class="fw" d="M3.500 1.500h9v9h-9zM5 9V4l5 5z"/><path class="h" d="M1 13.500h14"/>',
  drawq: '<path class="fw" d="M1.500 2.500h6v7h-6zM8.500 2.500h6v7h-6z"/><path class="h" d="M1 13h14"/>',
  person: '<path class="fw" d="M6.500 1h3v4c1 4 3 6 6 9l-2 1c-3-1-4-3-5.500-5C6.500 12 5 14 2.500 15l-2-1c4-3 5-5 6-9z"/>',
  annovis: '<path class="fw" d="M5.500 1h3v4c1 4 3 6 5 9h-2L7 10c-2 3-3 4-5 5l-1-1c3-3 4-5 4.500-9z"/><circle cx="12" cy="8" r="3" class="fo"/>',
  annogray: '<path stroke="#999" fill="#ccc" d="M6.500 1h3v4c1 4 3 6 6 9l-2 1-5.500-5-5.500 5-2-1c4-3 5-5 6-9zM2 3l4 3"/>',
  chip: '<path fill="#889" d="M1.500 3.500h11v5h-11z"/><path stroke-dasharray="1 2" d="M2 1.500h10M2 10.500h8"/>' + bulbB,
  plotok: '<path fill="#3a5a80" d="M3.500 1.500h8l2 3v5h-12z"/><path fill="#f0c820" d="M1 8h9v6H1z"/><path class="g" d="M6 11l3 4 6-6"/>',
  clean: '<path class="fw" d="M1.500 2.500h13v11h-13z"/><path class="h" d="M2 3.500h12"/>',
  flag: '<g stroke="none"><path fill="#f05020" d="M2 3c2-2 4-1 6 0L7 8C5 7 3 7 1 8z"/><path fill="#78c030" d="M9 3c2 1 4 1 6 0l-1 5c-2 1-4 1-6 0z"/><path fill="#3878e0" d="M1 9c2-1 4-1 6 0l-1 5c-2-1-4-1-6 0z"/><path fill="#f8c820" d="M8 9c2 1 4 1 6 0l-1 5c-2 1-4 1-6 0z"/></g>',
  ie: '<circle cx="8" cy="9" r="5" stroke="#8cd0ff" stroke-width="2.500"/><path stroke="#8cd0ff" stroke-width="2" d="M4 9h9"/><path stroke="#f8c830" stroke-width="1.500" d="M2 14C-1 10 10-1 15 2"/>',
  floppy: '<path fill="#3448a8" stroke="#dde" d="M1.500 1.500h13v13h-13z"/><path fill="#fff" stroke="none" d="M4 8h9v7H4z"/><path class="r" d="M5 10.500h7M5 12.500h7"/><path class="fg n" d="M5 2h6v4H5z"/>',
  recycle: '<path fill="#e0f0ff" stroke="#6098d0" d="M3 4l10-2 1 10-4 3-6-2z"/><circle cx="8" cy="8" r="3" class="b"/><path class="b" d="M8 8l6-6"/>',
  chrome: '<circle cx="8" cy="8" r="7" fill="#e8483a" stroke="none"/><path fill="#3aa850" stroke="none" d="M1 6a7 7 0 0 0 7 9l2-6-5 0z"/><path fill="#f8cc30" stroke="none" d="M15 6a7 7 0 0 1-7 9l3-7-2-2z"/><circle cx="8" cy="8" r="3" fill="#4888e8" stroke="#fff"/>',
  acad: '<path fill="#e8e8e8" d="M1 1h14v14H1z"/><path fill="#c82018" stroke="#701010" d="M11 2C4 1 2 5 5 8l6 5 1-3-4-3c-2-2 0-3 3-3z"/>',
  word: '<path class="fw" d="M4.500 1.500h10v13h-10zM11 4h3M11 7h3M11 10h3"/><path fill="#2858a8" stroke="none" d="M1 3h9v9H1z"/><path stroke="#fff" d="M3 5l1 5 1.500-4L7 10l1-5"/>',
};
for (const [name, base] of [['pointnew', 'point'], ['surfnew', 'surface'], ['alignnew', 'align'], ['crossnew', 'cross'], ['assemblynew', 'assembly'], ['pipenew', 'pipe']]) icons[name] = icons[base] + spark;

const svg = name => `<svg class="ico" viewBox="0 0 16 16" aria-hidden="true">${icons[name] || ''}</svg>`;

document.querySelectorAll('[data-icon]').forEach(el => el.insertAdjacentHTML('afterbegin', svg(el.dataset.icon)));

// "name>" adds a drop arrow, "name!" is pressed, "|" is a separator
document.querySelectorAll('[data-icons]').forEach(el => {
  el.insertAdjacentHTML('beforeend', el.dataset.icons.split(' ').map(token => {
    if (token === '|') return '<span class="sep"></span>';
    const name = token.replace(/[>!]/, '');
    const drop = token.endsWith('>');
    const cls = 'tool' + (drop ? ' has-drop' : '') + (token.endsWith('!') ? ' active' : '');
    return `<button class="${cls}" aria-label="${name}">${svg(name)}${drop ? '<span class="drop">▼</span>' : ''}</button>`;
  }).join(''));
});

// Surface contours: each level crosses the same triangle edges at an even step
const step = (x, y, dx, dy) => k => [x + dx * k, y + dy * k];
const north = step(821, 268, 18.43, 6.49);
const ridge = step(910.8, 587.9, 15.27, -4.755);
const east = step(758.7, 1183.8, 20.68, -25.9);
const slope = step(924.8, 535.6, 8.33, 22.05);
const foot = step(834.5, 671.9, 14.99, 12.18);
const south = step(1648, 739.7, -46, 7.2);
const corner = step(858.6, 673.5, -8.92, 10.29);
const valley = step(940.2, 426.9, -12.71, 21.85);
const west = step(821.6, 268.9, -7.18, 29.25);
const peak = [941, 577];

const levels = [];
for (let k = 14; k <= 28; k++) levels.push([k, [north(k), ridge(k), east(k)]]);
for (let k = 14; k <= 21; k++) levels.push([k, [south(k), corner(k), valley(k), west(k)]]);
for (let k = 5; k <= 13; k++) levels.push([k, [north(k), ridge(k), slope(k), foot(k), corner(k), valley(k), west(k)]]);
levels.push(
  [1, [north(1), [881, 423], [832, 319], west(1)]],
  [1, [[915, 567], [849, 683]]],
  [2, [west(2), [843, 374], peak, north(2)]],
  [2, [peak, foot(2), corner(2), [856, 649], [906, 560], peak]],
  [3, [north(3), ridge(3), slope(3), foot(3), corner(3), [865, 608], [896, 552], [919, 564], [854, 427], west(3)]],
  [4, [north(4), ridge(4), slope(4), foot(4), corner(4), [870, 574], [886, 543], [898, 549], [866, 481], west(4)]],
);
document.getElementById('contours').innerHTML = levels.map(([k, pts]) =>
  `<polyline class="contour${k % 5 ? '' : ' major'}" points="${pts.map(p => p.map(Math.round).join()).join(' ')}"/>`).join('');
```
